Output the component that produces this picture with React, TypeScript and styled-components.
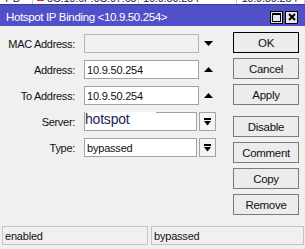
import React from "react";
import styled, { createGlobalStyle } from "styled-components";

const GlobalStyle = createGlobalStyle`
  html, body {
    margin: 0;
    padding: 0;
    background: #f0f0f0;
  }
  body {
    font-family: "Liberation Sans", Arial, sans-serif;
    font-size: 11px;
    color: #000;
  }
`;

const Window = styled.div`
  width: 305px;
  height: 249px;
  display: flex;
  flex-direction: column;
  background: #f0f0f0;
  overflow: hidden;
`;

// the list window behind the dialog, only its last pixels show
const BackRow = styled.div`
  height: 4px;
  overflow: hidden;
  background: #fff;
`;

const BackRowInner = styled.div`
  display: flex;
  align-items: center;
  margin-top: -9px;
  height: 13px;
  font-size: 11px;
  letter-spacing: -0.2px;
  color: #1a1a5a;
`;

const BackCell = styled.div<{ $w: number }>`
  width: ${(p) => p.$w}px;
  padding-left: 4px;
  border-right: 1px solid #c8c8c8;
  box-sizing: border-box;
  white-space: nowrap;
  display: flex;
  align-items: center;
  gap: 3px;
`;

const PinkDot = styled.span`
  width: 7px;
  height: 7px;
  background: #c0306a;
  display: inline-block;
`;

const TitleBar = styled.div`
  height: 22px;
  background: #5050c8;
  display: flex;
  align-items: center;
  padding: 0 7px 0 6px;
  border-top: 1px solid #3a3a90;
  box-sizing: border-box;
`;

const Title = styled.div`
  flex: 1;
  color: #fff;
  font-size: 11.5px;
  letter-spacing: -0.35px;
  padding-top: 3px;
`;

const TitleButtons = styled.div`
  display: flex;
  gap: 2px;
  padding-top: 3px;
`;

const TitleButton = styled.div`
  width: 13px;
  height: 13px;
  border: 1px solid #000;
  background: #e6e6e6;
  display: flex;
  align-items: center;
  justify-content: center;
  box-sizing: border-box;
`;

const Body = styled.div`
  flex: 1;
  display: flex;
`;

const Form = styled.div`
  width: 233px;
  padding-top: 8px;
  display: flex;
  flex-direction: column;
  gap: 7px;
`;

const Row = styled.div`
  display: flex;
  align-items: center;
  height: 19px;
`;

const Label = styled.div`
  width: 84px;
  text-align: right;
  padding-right: 9px;
  box-sizing: border-box;
  letter-spacing: -0.3px;
  color: #111;
`;

const Field = styled.div<{ $w: number; $disabled?: boolean }>`
  width: ${(p) => p.$w}px;
  height: 19px;
  box-sizing: border-box;
  border: 1px solid ${(p) => (p.$disabled ? "#b4b4b4" : "#a3a3a3")};
  background: ${(p) => (p.$disabled ? "#f0f0f0" : "#fff")};
  display: flex;
  align-items: center;
  padding-left: 2px;
  letter-spacing: -0.2px;
  color: #111;
  white-space: nowrap;
`;

const Overflowed = styled.span`
  background: #fff;
  color: #1c2658;
  font-size: 14px;
  line-height: 14px;
  padding-right: 26px;
  margin-left: -2px;
  margin-top: -5px;
`;

const ArrowSlot = styled.div`
  width: 17px;
  margin-left: 1px;
  display: flex;
  justify-content: center;
`;

const DropButton = styled.div`
  width: 17px;
  height: 19px;
  margin-left: 2px;
  box-sizing: border-box;
  border: 1px solid #a3a3a3;
  background: #f4f4f4;
  display: flex;
  align-items: center;
  justify-content: center;
`;

const Buttons = styled.div`
  width: 66px;
  padding-top: 6px;
  display: flex;
  flex-direction: column;
  gap: 5px;
`;

const Button = styled.div<{ $default?: boolean; $spaced?: boolean }>`
  height: 21px;
  box-sizing: border-box;
  border: 1px solid ${(p) => (p.$default ? "#000" : "#7a7a7a")};
  background: #ececec;
  display: flex;
  align-items: center;
  justify-content: center;
  letter-spacing: -0.3px;
  font-size: 11.5px;
  color: #111;
  margin-top: ${(p) => (p.$spaced ? "6px" : "0")};
`;

const StatusBar = styled.div`
  height: 21px;
  display: flex;
  gap: 3px;
  padding: 0 1px 2px 2px;
`;

const StatusCell = styled.div<{ $w: number }>`
  width: ${(p) => p.$w}px;
  height: 19px;
  box-sizing: border-box;
  border: 1px solid #c4c4c4;
  display: flex;
  align-items: center;
  padding-left: 2px;
  letter-spacing: -0.2px;
  color: #111;
`;

const DownTri = () => (
  <svg width="9" height="5" viewBox="0 0 9 5">
    <path d="M0 0h9L4.5 5z" fill="#000" />
  </svg>
);

const UpTri = () => (
  <svg width="9" height="5" viewBox="0 0 9 5">
    <path d="M0 5h9L4.5 0z" fill="#000" />
  </svg>
);

const BarDown = () => (
  <svg width="7" height="8" viewBox="0 0 7 8">
    <rect x="0" y="0" width="7" height="2" fill="#000" />
    <path d="M0 3h7L3.5 7.5z" fill="#000" />
  </svg>
);

const rows = [
  { label: "MAC Address:", value: "", disabled: true, tail: "down" },
  { label: "Address:", value: "10.9.50.254", tail: "up" },
  { label: "To Address:", value: "10.9.50.254", tail: "up" },
];

export default function App() {
  return (
    <>
      <GlobalStyle />
      <Window>
        <BackRow>
          <BackRowInner>
            <BackCell $w={34}>7 D</BackCell>
            <BackCell $w={110}>
              <PinkDot />
              5C:10:0F:0C:07:65
            </BackCell>
            <BackCell $w={102}>10.9.50.254</BackCell>
            <BackCell $w={70}>10.9.50.254</BackCell>
          </BackRowInner>
        </BackRow>
        <TitleBar>
          <Title>Hotspot IP Binding &lt;10.9.50.254&gt;</Title>
          <TitleButtons>
            <TitleButton>
              <svg width="9" height="9" viewBox="0 0 9 9">
                <rect x="0.5" y="0.5" width="8" height="8" fill="none" stroke="#000" />
                <rect x="0" y="0" width="9" height="2" fill="#000" />
              </svg>
            </TitleButton>
            <TitleButton>
              <svg width="8" height="8" viewBox="0 0 8 8">
                <path d="M1 1L7 7M7 1L1 7" stroke="#000" strokeWidth="2" />
              </svg>
            </TitleButton>
          </TitleButtons>
        </TitleBar>
        <Body>
          <Form>
            {rows.map((r) => (
              <Row key={r.label}>
                <Label>{r.label}</Label>
                <Field $w={115} $disabled={r.disabled}>
                  {r.value}
                </Field>
                <ArrowSlot>{r.tail === "down" ? <DownTri /> : <UpTri />}</ArrowSlot>
              </Row>
            ))}
            <Row>
              <Label>Server:</Label>
              <Field $w={113}>
                <Overflowed>hotspot</Overflowed>
              </Field>
              <DropButton>
                <BarDown />
              </DropButton>
            </Row>
            <Row>
              <Label>Type:</Label>
              <Field $w={113}>bypassed</Field>
              <DropButton>
                <BarDown />
              </DropButton>
            </Row>
          </Form>
          <Buttons>
            <Button $default>OK</Button>
            <Button>Cancel</Button>
            <Button>Apply</Button>
            <Button $spaced>Disable</Button>
            <Button>Comment</Button>
            <Button>Copy</Button>
            <Button>Remove</Button>
          </Buttons>
        </Body>
        <StatusBar>
          <StatusCell $w={146}>enabled</StatusCell>
          <StatusCell $w={153}>bypassed</StatusCell>
        </StatusBar>
      </Window>
    </>
  );
}
